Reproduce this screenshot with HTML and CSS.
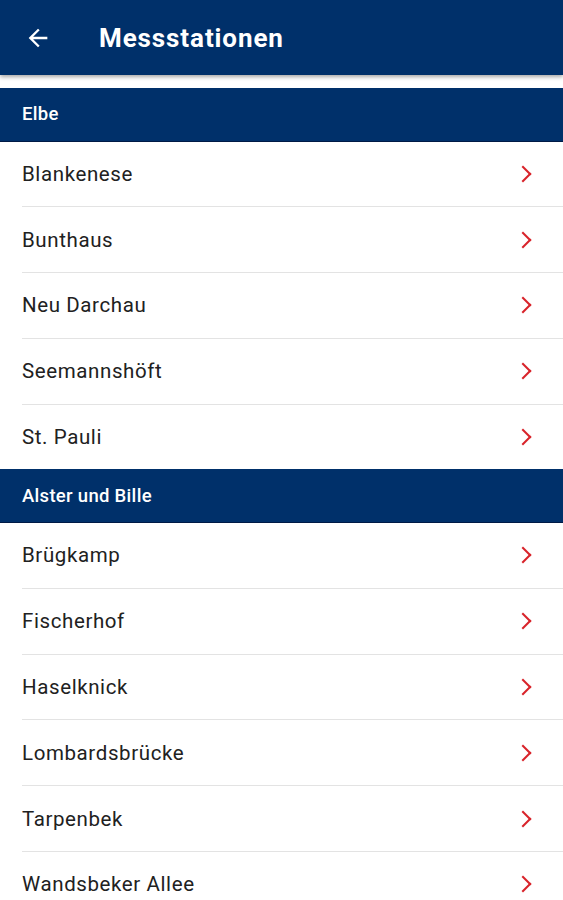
FILE: index.html
```html
<!DOCTYPE html>
<html lang="de">
<head>
  <meta charset="UTF-8">
  <title>Messstationen</title>
  <link rel="stylesheet" href="styles.css">
</head>
<body>

  <header class="appbar">
    <svg class="back" viewBox="0 0 24 24" width="28" height="28">
      <path d="M20 11H7.83l5.59-5.59L12 4l-8 8 8 8 1.41-1.41L7.83 13H20v-2z" fill="#fff"/>
    </svg>
    <h1>Messstationen</h1>
  </header>

  <section class="group">
    <h2>Elbe</h2>
    <ul>
      <li>Blankenese</li>
      <li>Bunthaus</li>
      <li>Neu Darchau</li>
      <li>Seemannshöft</li>
      <li>St. Pauli</li>
    </ul>
  </section>

  <section class="group">
    <h2>Alster und Bille</h2>
    <ul>
      <li>Brügkamp</li>
      <li>Fischerhof</li>
      <li>Haselknick</li>
      <li>Lombardsbrücke</li>
      <li>Tarpenbek</li>
      <li>Wandsbeker Allee</li>
    </ul>
  </section>

</body>
</html>
```

FILE: styles.css
```css
body {
  margin: 0;
  font-family: Roboto, "Liberation Sans", sans-serif;
  background-color: #fff;
  color: #212121;
}
.appbar {
  height: 75px;
  background-color: #00306a;
  display: flex;
  align-items: center;
  padding-left: 24px;
  margin-bottom: 13px;
  box-shadow: 0 2px 4px rgba(0, 0, 0, 0.35);
}
.back {
  flex: none;
}
.appbar h1 {
  margin: 0 0 0 47px;
  color: #fff;
  font-size: 26px;
  font-weight: 700;
  letter-spacing: 0.9px;
}
.group h2 {
  margin: 0;
  height: 52.5px;
  display: flex;
  align-items: center;
  padding-left: 22px;
  background-color: #00306a;
  border-bottom: 1px solid #001a45;
  color: #fff;
  font-size: 18.5px;
  font-weight: 500;
  letter-spacing: 0.3px;
}
.group ul {
  list-style: none;
  margin: 0;
  padding: 0;
}
.group li {
  height: 64.8px;
  margin-left: 22px;
  padding-right: 34px;
  display: flex;
  align-items: center;
  justify-content: space-between;
  font-size: 20.5px;
  letter-spacing: 0.6px;
  border-bottom: 1px solid #e3e3e3;
}
.group li:last-child {
  border-bottom: none;
}
.group li::after {
  content: "";
  width: 10px;
  height: 10px;
  border-top: 2.5px solid #d8232a;
  border-right: 2.5px solid #d8232a;
  transform: rotate(45deg);
}
```
